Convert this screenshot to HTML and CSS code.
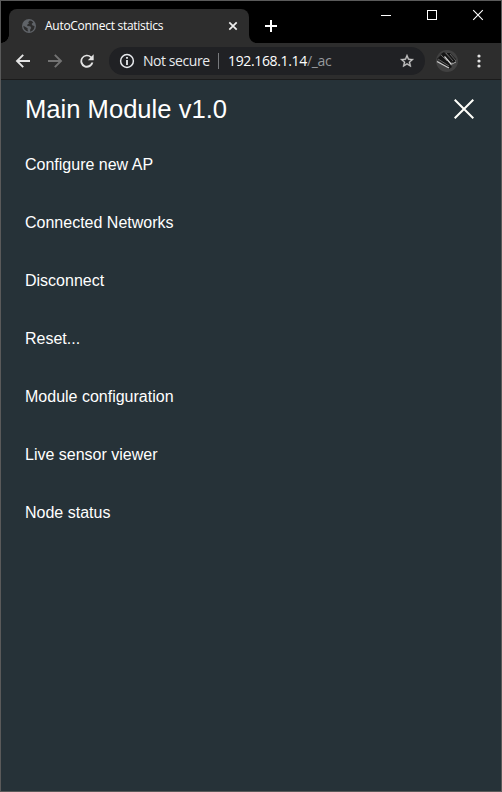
FILE: index.html
```html
<!DOCTYPE html>
<html lang="en">
<head>
<meta charset="utf-8">
<title>AutoConnect statistics</title>
<link rel="stylesheet" href="styles.css">
</head>
<body>
<div class="window">
  <header class="tabstrip">
    <div class="tab">
      <svg class="globe" viewBox="0 0 14 14"><circle cx="7" cy="7" r="7" fill="#5f6368"/><path d="M7.8 1.4 6.2 3.2 7 4.6 5.4 5.4 5.2 7 8.3 7.2 9.3 9 8.3 10.2 8 12.6C10.8 12.3 12.6 9.8 12.5 7L10.6 6.6 9.6 5 11.3 3.3C10.4 2.2 9.2 1.5 7.8 1.4ZM1.4 6.8 4 8.2 5.8 9.4 5.5 10.8 6.4 12.6C3.5 12.3 1.3 9.8 1.4 6.8Z" fill="#2d2d2d"/></svg>
      <span class="tab-title">AutoConnect statistics</span>
      <svg class="tab-close" viewBox="0 0 10 10"><path d="M1.3 1.3 8.7 8.7M8.7 1.3 1.3 8.7" stroke="#eee" stroke-width="1.7"/></svg>
    </div>
    <svg class="tab-foot" viewBox="0 0 8 8"><path d="M0 0A8 8 0 0 0 8 8H0Z" fill="#2d2d2d"/></svg>
    <svg class="new-tab" viewBox="0 0 12 12"><path d="M6 0V12M0 6H12" stroke="#fff" stroke-width="2"/></svg>
    <div class="controls">
      <svg viewBox="0 0 46 29"><path d="M18 14.5H28" stroke="#fff"/></svg>
      <svg viewBox="0 0 46 29"><rect x="18.5" y="9.5" width="9" height="9" fill="none" stroke="#fff"/></svg>
      <svg viewBox="0 0 46 29"><path d="M18.2 9.2 27.8 18.8M27.8 9.2 18.2 18.8" stroke="#fff" stroke-width="1.1"/></svg>
    </div>
  </header>
  <nav class="toolbar">
    <svg class="nav-icon" viewBox="0 0 18 18"><path d="M9.200 2.800 3 9 9.200 15.200M3 9H16" fill="none" stroke="#e4e4e4" stroke-width="1.900"/></svg>
    <svg class="nav-icon" viewBox="0 0 18 18"><path d="M8.800 2.800 15 9 8.800 15.200M15 9H2" fill="none" stroke="#737373" stroke-width="1.900"/></svg>
    <svg class="reload" viewBox="0 0 24 24"><path fill="#e4e4e4" d="M18.700 5.300A9.800 9.800 0 1 0 21.500 14.300h-2.900A7.100 7.100 0 1 1 17 7l-3.800 3.800H22V2z"/></svg>
    <div class="omnibox">
      <svg class="info" viewBox="0 0 16 16"><circle cx="8" cy="8" r="6.400" fill="none" stroke="#e8eaed" stroke-width="1.500"/><path d="M8 4V5.800M8 7V12" stroke="#e8eaed" stroke-width="1.800"/></svg>
      <span class="secure">Not secure</span>
      <span class="divider"></span>
      <span class="url">192.168.1.14<span class="path">/_ac</span></span>
      <svg class="star" viewBox="0 0 24 24"><path fill="#c8c8c8" stroke="#c8c8c8" stroke-width=".5" d="M22 9.240l-7.190-.62L12 2 9.190 8.630 2 9.240l5.460 4.730L5.820 21 12 17.270 18.180 21l-1.630-7.030L22 9.240zM12 15.400l-3.760 2.270 1-4.280-3.320-2.880 4.380-.38L12 6.100l1.710 4.040 4.380.38-3.320 2.880 1 4.280L12 15.400z"/></svg>
    </div>
    <svg class="avatar" viewBox="0 0 22 22"><circle cx="11" cy="11" r="11" fill="#414141"/><path d="M1 9 5 5 12 12 16 17 13 19ZM5 4 8 2 16 11 14 15ZM10 3 14 3 20 9 18 14Z" fill="#151515"/><path d="M1 11.500 13 18" stroke="#ccc" stroke-width="1.200"/><path d="M8.500 6.500 15.500 14.500" stroke="#ddd" stroke-width="1.200"/><path d="M2 9 13 16M5 5 11 11M10 3 17 11M14 4 20 11" stroke="#777" stroke-width=".8"/><path d="M16 14 20 12" stroke="#aaa"/></svg>
    <svg class="dots" viewBox="0 0 4 14"><g fill="#e4e4e4"><circle cx="2" cy="2" r="1.600"/><circle cx="2" cy="7" r="1.600"/><circle cx="2" cy="12" r="1.600"/></g></svg>
  </nav>
  <main class="page">
    <div class="heading">
      <h1>Main Module v1.0</h1>
      <svg class="menu-close" viewBox="0 0 20 20"><path d="M.7.700 19.300 19.300M19.300.700.700 19.300" stroke="#fffffa" stroke-width="2"/></svg>
    </div>
    <ul class="menu">
      <li>Configure new AP</li>
      <li>Connected Networks</li>
      <li>Disconnect</li>
      <li>Reset...</li>
      <li>Module configuration</li>
      <li>Live sensor viewer</li>
      <li>Node status</li>
    </ul>
  </main>
</div>
</body>
</html>
```
FILE: styles.css
```css
* { box-sizing: border-box; }
body { margin: 0; background: #000; }
svg { display: block; flex: none; }
.window {
  width: 502px;
  height: 792px;
  border: 1px solid #5a5a5a;
  display: flex;
  flex-direction: column;
  color: #fff;
  font-family: "Open Sans", "Noto Sans", sans-serif;
  white-space: nowrap;
}
.tabstrip {
  height: 42px;
  flex: none;
  display: flex;
  background: #000;
}
.tabstrip::before {
  content: "";
  width: 8px;
  height: 8px;
  align-self: flex-end;
  background: radial-gradient(circle at 0 0, #000 7.5px, #2d2d2d 8px);
}
.tab {
  width: 240px;
  height: 34px;
  margin-top: 8px;
  padding: 0 11px 0 13px;
  border-radius: 8px 8px 0 0;
  background: #2d2d2d;
  display: flex;
  align-items: center;
}
.globe { width: 14px; height: 14px; }
.tab-title { margin-left: 9px; font-size: 12px; line-height: 16px; letter-spacing: -0.28px; }
.tab-close { width: 10px; height: 10px; margin-left: auto; }
.tab-foot { width: 8px; height: 8px; align-self: flex-end; }
.new-tab { width: 12px; height: 12px; margin: 19px 0 0 8px; }
.controls { display: flex; margin-left: auto; }
.controls svg { width: 46px; height: 29px; }
.toolbar {
  height: 37px;
  flex: none;
  display: flex;
  align-items: center;
  padding: 0 20px 0 13px;
  background: #2d2d2d;
  border-bottom: 1px solid #1b1b1b;
}
.nav-icon { width: 18px; height: 18px; margin-right: 14px; }
.reload { width: 16px; height: 16px; margin: 0 14px 0 1px; }
.omnibox {
  width: 316px;
  height: 28px;
  border-radius: 14px;
  background: #202124;
  display: flex;
  align-items: center;
  padding: 0 10px;
  font-size: 14px;
  line-height: 20px;
}
.info { width: 16px; height: 16px; }
.secure { width: 75px; margin-left: 8px; letter-spacing: -0.43px; color: #e8eaed; }
.divider { width: 1px; height: 16px; background: #77797c; }
.url { margin-left: 9px; letter-spacing: -0.35px; }
.path { color: #96999d; }
.star { width: 16px; height: 16px; margin-left: auto; }
.avatar { width: 22px; height: 22px; margin-left: 11px; }
.dots { width: 4px; height: 14px; margin-left: auto; }
.page {
  flex: 1;
  background: #263238;
  font-family: "Liberation Sans", Arial, sans-serif;
}
.heading {
  height: 56px;
  display: flex;
  align-items: center;
  justify-content: space-between;
  padding: 0 27px 0 24px;
}
.heading h1 { margin: 2px 0 0; font-size: 25.6px; font-weight: 400; line-height: 30px; }
.menu-close { width: 20px; height: 20px; margin-top: 2px; }
.menu { list-style: none; margin: 0; padding: 0 24px; font-size: 16px; line-height: 58px; }
.menu li { height: 58px; }
```
